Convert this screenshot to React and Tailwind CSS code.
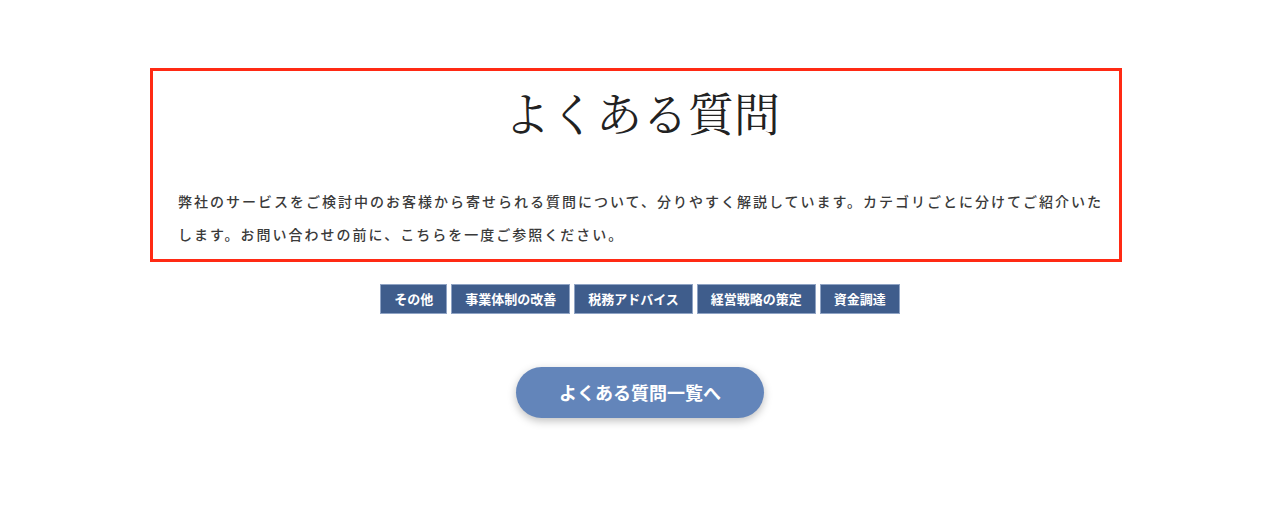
export default function App() {
  const tags = ["その他", "事業体制の改善", "税務アドバイス", "経営戦略の策定", "資金調達"];
  return (
    <div className="w-[1280px] h-[523px] bg-white flex flex-col items-center" style={{ fontFamily: '"Noto Sans CJK JP", "Noto Sans", sans-serif' }}>
      <div className="mt-[68px] mr-[8px] w-[972px] border-[3px] border-[#ff2a14] pt-[7px] pb-[8px] pl-[25px] pr-[6px]">
        <h2 className="text-center text-[46px] leading-[67px] text-[#222] font-normal pr-[7px]" style={{ fontFamily: '"Noto Serif CJK JP", "Noto Sans CJK JP", serif' }}>
          よくある質問
        </h2>
        <p className="mt-[40px] text-[14px] leading-[33px] tracking-[2px] text-[#3a3a3a] font-medium">
          弊社のサービスをご検討中のお客様から寄せられる質問について、分りやすく解説しています。カテゴリごとに分けてご紹介いたします。お問い合わせの前に、こちらを一度ご参照ください。
        </p>
      </div>
      <div className="mt-[22px] flex gap-[4px]">
        {tags.map((t) => (
          <a key={t} className="h-[30px] flex items-center px-[13px] border border-[#8fa3c4] bg-[#3f5d8c] text-white text-[13px] font-bold">
            {t}
          </a>
        ))}
      </div>
      <a className="mt-[53px] w-[248px] h-[51px] rounded-full bg-[#6385ba] text-white text-[18px] font-bold flex items-center justify-center shadow-[0_3px_8px_rgba(0,0,0,0.25)]">
        よくある質問一覧へ
      </a>
    </div>
  );
}
